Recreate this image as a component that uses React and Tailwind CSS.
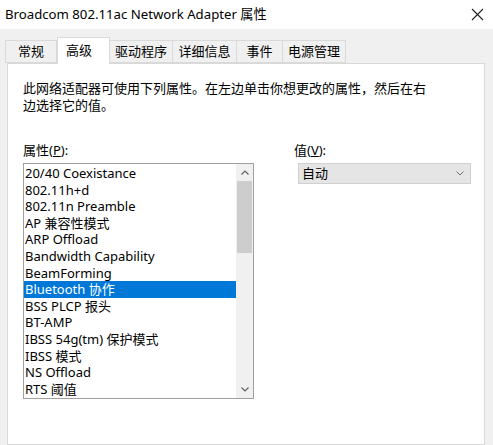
import React from 'react';

const tabs = ['常规', '高级', '驱动程序', '详细信息', '事件', '电源管理'];

const props = [
  '20/40 Coexistance',
  '802.11h+d',
  '802.11n Preamble',
  'AP 兼容性模式',
  'ARP Offload',
  'Bandwidth Capability',
  'BeamForming',
  'Bluetooth 协作',
  'BSS PLCP 报头',
  'BT-AMP',
  'IBSS 54g(tm) 保护模式',
  'IBSS 模式',
  'NS Offload',
  'RTS 阈值',
];

const font = { fontFamily: '"Segoe UI", "Noto Sans", "Noto Sans CJK SC", sans-serif' };

const App = () => {
  return (
    <div
      className="w-[493px] h-[445px] bg-[#f0f0f0] flex flex-col overflow-hidden text-[#000] text-[13px]"
      style={font}
    >
      {/* Title bar */}
      <div className="h-[29px] bg-white flex items-center justify-between pl-[5px] pr-[8px] shrink-0">
        <span className="text-[13.2px] leading-none">Broadcom 802.11ac Network Adapter 属性</span>
        <svg width="13" height="13" viewBox="0 0 13 13" className="mr-[1px]">
          <path d="M1 1L12 12M12 1L1 12" stroke="#222" strokeWidth="1.1" />
        </svg>
      </div>

      {/* Tabs */}
      <div className="flex items-end pl-[5px] pt-[7px] h-[34px] shrink-0 relative z-10">
        {tabs.map((t, i) =>
          i === 1 ? (
            <div
              key={t}
              className="h-[27px] -mb-[1px] w-[53px] bg-white border border-b-0 border-[#d9d9d9] flex items-start pt-[3px] pl-[8px]"
            >
              {t}
            </div>
          ) : (
            <div
              key={t}
              className={`h-[23px] bg-[#f0f0f0] border border-[#d9d9d9] -ml-[1px] first:ml-0 flex items-center justify-center ${
                i === 0 ? 'w-[52px]' : i === 2 ? 'w-[64px]' : i === 3 ? 'w-[65px]' : i === 4 ? 'w-[47px]' : 'w-[64px]'
              }`}
            >
              {t}
            </div>
          )
        )}
      </div>

      {/* Panel */}
      <div className="flex-1 ml-[7px] mr-[8px] bg-white border border-[#d9d9d9] pl-[15px] pt-[16px]">
        <p className="leading-[17px] whitespace-nowrap">
          此网络适配器可使用下列属性。在左边单击你想更改的属性，然后在右
          <br />
          边选择它的值。
        </p>

        <div className="flex mt-[28px]">
          {/* Property list */}
          <div className="w-[231px]">
            <div className="leading-[17px]">
              属性(<span className="underline">P</span>):
            </div>
            <div className="mt-[4px] h-[236px] border border-[#a0a0a0] flex">
              <div className="flex-1 pt-[1px]">
                {props.map((p, i) => (
                  <div
                    key={p}
                    className={`h-[16.6px] leading-[16.6px] pl-[1px] whitespace-nowrap ${
                      i === 7 ? 'bg-[#0078d7] text-white' : ''
                    }`}
                  >
                    {p}
                  </div>
                ))}
              </div>
              <div className="w-[17px] bg-[#f0f0f0] flex flex-col items-center">
                <div className="h-[17px] flex items-center justify-center">
                  <svg width="8" height="5" viewBox="0 0 8 5">
                    <path d="M0.5 4.5L4 1L7.5 4.5" stroke="#606060" fill="none" strokeWidth="1.2" />
                  </svg>
                </div>
                <div className="w-[15px] h-[72px] bg-[#cdcdcd]" />
                <div className="flex-1" />
                <div className="h-[17px] flex items-center justify-center">
                  <svg width="8" height="5" viewBox="0 0 8 5">
                    <path d="M0.5 0.5L4 4L7.5 0.5" stroke="#606060" fill="none" strokeWidth="1.2" />
                  </svg>
                </div>
              </div>
            </div>
          </div>

          {/* Value */}
          <div className="ml-[40px]">
            <div className="leading-[17px]">
              值(<span className="underline">V</span>):
            </div>
            <div className="mt-[4px] ml-[4px] w-[173px] h-[21px] bg-[#e5e5e5] border border-[#d0d0d0] flex items-center justify-between pl-[3px] pr-[6px]">
              <span>自动</span>
              <svg width="8" height="5" viewBox="0 0 8 5">
                <path d="M0.5 0.5L4 4L7.5 0.5" stroke="#707070" fill="none" strokeWidth="1" />
              </svg>
            </div>
          </div>
        </div>
      </div>
    </div>
  );
};

export default App;
